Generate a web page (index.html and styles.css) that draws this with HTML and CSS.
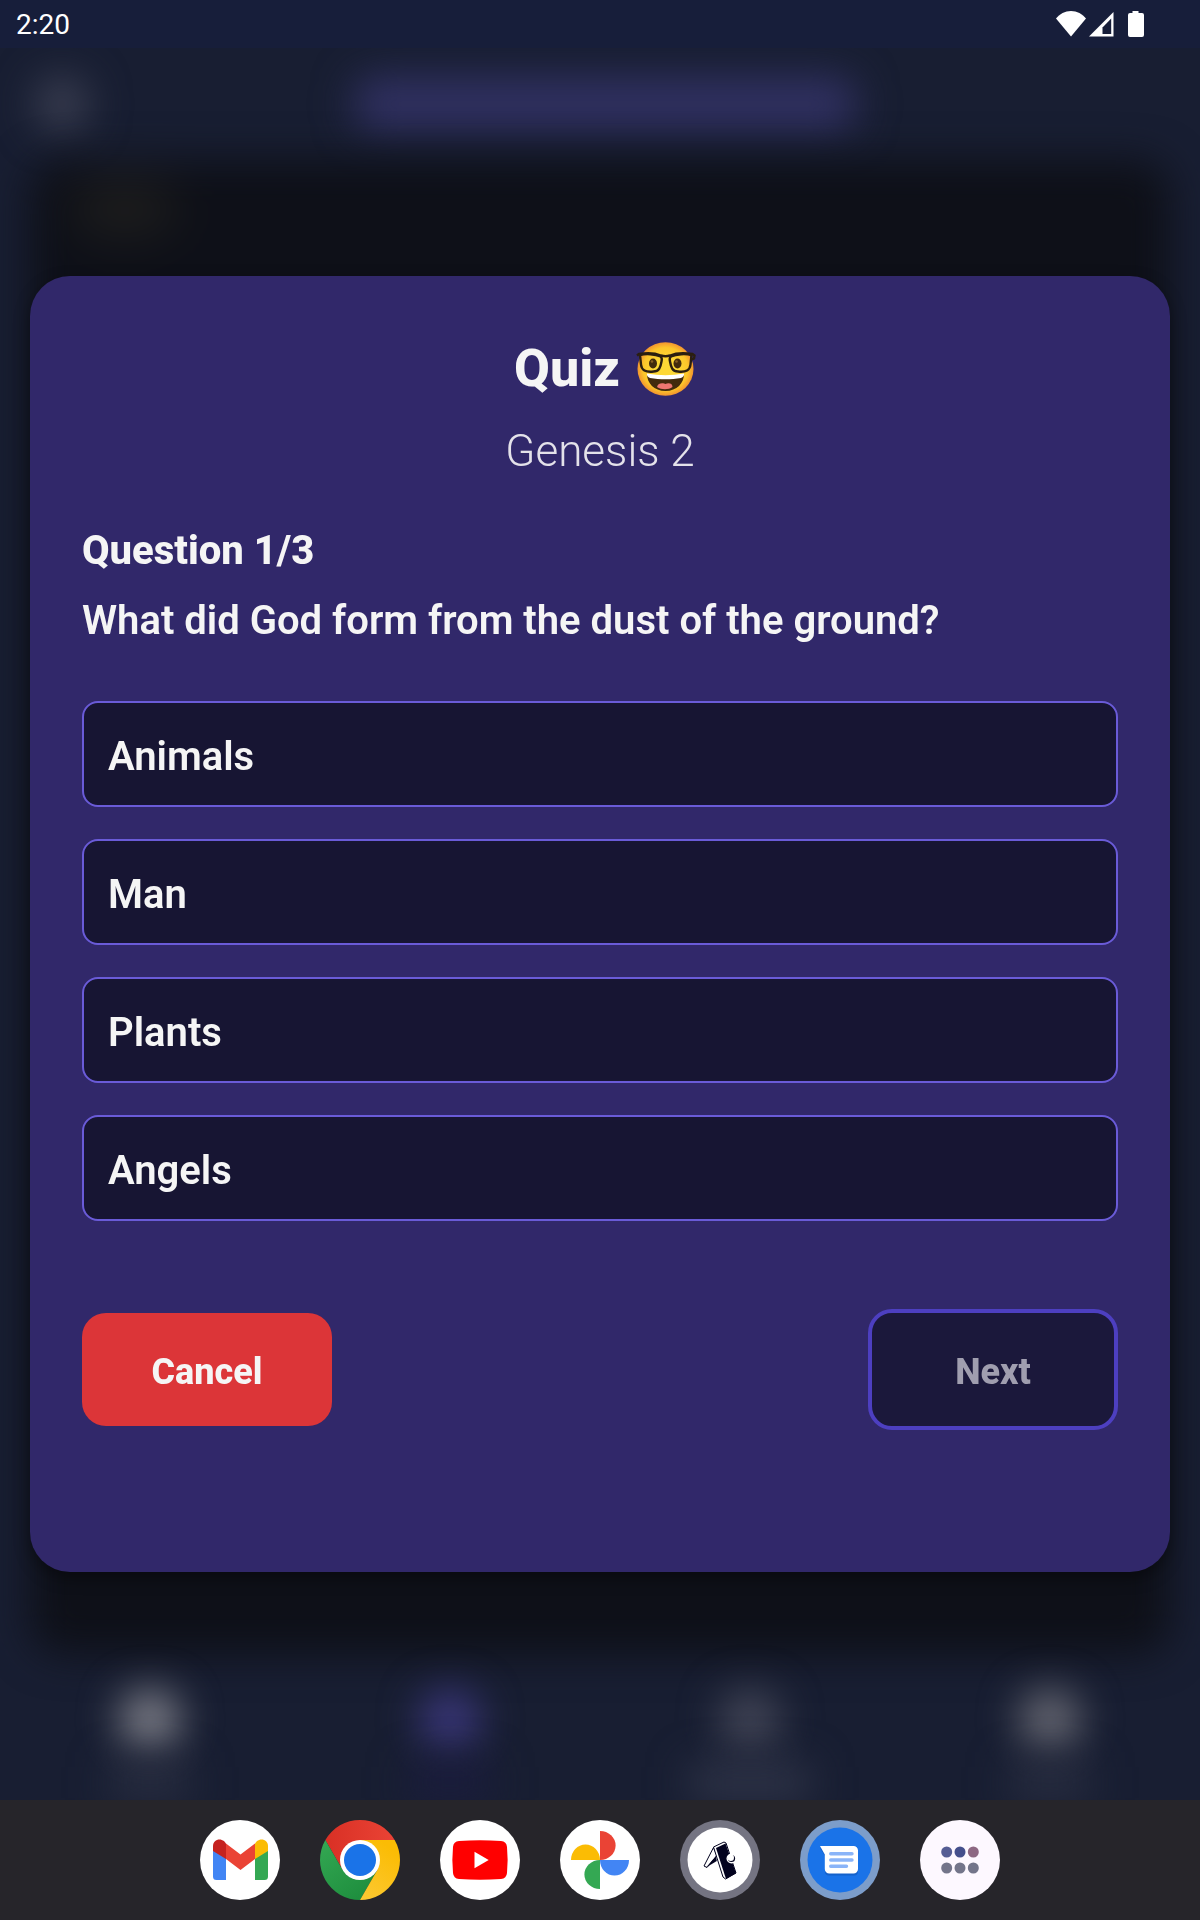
FILE: index.html
```html
<!DOCTYPE html>
<html lang="en">
<head>
<meta charset="utf-8">
<meta name="viewport" content="width=device-width, initial-scale=1">
<title>Quiz - Genesis 2</title>
<link rel="stylesheet" href="styles.css">
</head>
<body>
<div class="screen">
  <header class="status-bar">
    <time class="clock">2:20</time>
    <svg class="status-icons" viewBox="0 0 90 28" aria-hidden="true">
      <path d="M15 26.500 0 8.500C3.500 4 9 1 15 1s11.500 3 15 7.500z" fill="#fff"/>
      <path d="M33 26.500 57.500 2v24.500z" fill="#fff"/>
      <path d="M46.500 24V17.500L55.200 8.500V24z" fill="#171e3a"/>
      <path d="M76.500 3V1h6v2H86a2 2 0 0 1 2 2v20a2 2 0 0 1-2 2H74a2 2 0 0 1-2-2V5a2 2 0 0 1 2-2z" fill="#fff"/>
    </svg>
  </header>

  <main class="stage">
    <div class="backdrop" aria-hidden="true">
      <div class="bg-header">
        <span class="glow avatar"></span>
        <span class="glow pill"></span>
      </div>
      <div class="bg-panel"><span class="glow tag"></span></div>
      <div class="bg-tabs">
        <div class="bg-tab"><span class="glow tab-icon bright"></span><span class="glow tab-label"></span></div>
        <div class="bg-tab"><span class="glow tab-icon active"></span><span class="glow tab-label dim"></span></div>
        <div class="bg-tab"><span class="glow tab-icon faint"></span><span class="glow tab-label wide"></span></div>
        <div class="bg-tab"><span class="glow tab-icon soft"></span><span class="glow tab-label"></span></div>
      </div>
    </div>

    <section class="quiz" role="dialog" aria-labelledby="quiz-title">
      <h1 class="quiz-title" id="quiz-title">Quiz
        <svg class="nerd" viewBox="0 0 60 54" role="img" aria-label="nerd face">
          <defs>
            <radialGradient id="face" cx=".5" cy=".5" r=".5">
              <stop offset=".4" stop-color="#fdd835"/>
              <stop offset=".8" stop-color="#fcc62a"/>
              <stop offset="1" stop-color="#f2952f"/>
            </radialGradient>
          </defs>
          <ellipse cx="29.500" cy="27" rx="28" ry="26.700" fill="url(#face)"/>
          <path d="M11 32q18 4.500 37 0c0 9-7 17-18.500 17S11 41 11 32z" fill="#422b0d"/>
          <path d="M11 31.500q18.500 3.500 37 0c.5 2-1 4-3 4.500-10 1.800-21 1.800-31 0-2-.5-3.500-2.500-3-4.500z" fill="#fff"/>
          <path d="M21 45c1-5 7-4 8.500-3 2-1 7-1.500 7 3-4 3-11 3-15.500 0z" fill="#ed7770"/>
          <ellipse cx="17" cy="21.500" rx="4" ry="5" fill="#422b0d"/>
          <ellipse cx="41.500" cy="21.500" rx="4" ry="5" fill="#422b0d"/>
          <circle cx="16" cy="19.500" r="1.300" fill="#896024"/>
          <circle cx="40.500" cy="19.500" r="1.300" fill="#896024"/>
          <path d="M1 13.500 3 12c6-1 16-1 22 1.500 3 1 6 1 9 0C40 11 50 11 56.500 12l2 1.500-.5 3-2 1" fill="none" stroke="#2b1f10" stroke-width="2.400"/>
          <path d="M4 13c6-1.500 15-1 20.500 1.500 1.500 1 1.500 3 1 5-1 6-2.500 10-8 10-8 1-12-1.500-12.500-7z" fill="none" stroke="#2b1f10" stroke-width="2.400"/>
          <path d="M55.500 13c-6-1.500-15-1-20.500 1.500-1.500 1-1.500 3-1 5 1 6 2.500 10 8 10 8 1 12-1.500 12.500-7z" fill="none" stroke="#2b1f10" stroke-width="2.400"/>
        </svg>
      </h1>
      <p class="quiz-subtitle">Genesis 2</p>

      <h2 class="question-count">Question 1/3</h2>
      <p class="question-text">What did God form from the dust of the ground?</p>

      <div class="options">
        <button class="option" type="button">Animals</button>
        <button class="option" type="button">Man</button>
        <button class="option" type="button">Plants</button>
        <button class="option" type="button">Angels</button>
      </div>

      <div class="actions">
        <button class="action cancel" type="button">Cancel</button>
        <button class="action next" type="button" disabled>Next</button>
      </div>
    </section>
  </main>

  <nav class="dock" aria-label="Apps">
    <button class="app" type="button" aria-label="Gmail">
      <svg viewBox="0 0 80 80">
        <circle cx="40" cy="40" r="40" fill="#fff"/>
        <path d="M13 30 26 38V60H16.500A3.500 3.500 0 0 1 13 56.500z" fill="#4285f4"/>
        <path d="M68 30 55 38V60h9.500a3.500 3.500 0 0 0 3.500-3.500z" fill="#34a853"/>
        <path d="M26 23.500 40.500 34.500 55 23.500V39L40.500 50 26 39z" fill="#ea4335"/>
        <path d="M13 31V26c0-6 6.500-8.500 11-5l2 2.500V39z" fill="#c5221f"/>
        <path d="M68 31V26c0-6-6.500-8.500-11-5l-2 2.500V39z" fill="#fbbc04"/>
      </svg>
    </button>
    <button class="app" type="button" aria-label="Chrome">
      <svg viewBox="0 0 80 80">
        <defs>
          <linearGradient id="cr"><stop offset="0" stop-color="#d93025"/><stop offset="1" stop-color="#ea4335"/></linearGradient>
          <linearGradient id="cg" x1="0" y1="0" x2=".7" y2="1"><stop offset="0" stop-color="#34a853"/><stop offset="1" stop-color="#1e8e3e"/></linearGradient>
          <linearGradient id="cy" x1="0" y1="1" x2=".5" y2="0"><stop offset="0" stop-color="#fcc934"/><stop offset="1" stop-color="#fbbc04"/></linearGradient>
        </defs>
        <path d="M5.360 20A40 40 0 0 1 74.640 20H40L22.700 50z" fill="url(#cr)"/>
        <path d="M5.360 20A40 40 0 0 0 40 80L57.300 50H22.700z" fill="url(#cg)"/>
        <path d="M74.640 20A40 40 0 0 1 40 80L57.300 50 40 20z" fill="url(#cy)"/>
        <circle cx="40" cy="40" r="20" fill="#fff"/>
        <circle cx="40" cy="40" r="16" fill="#1a73e8"/>
      </svg>
    </button>
    <button class="app" type="button" aria-label="YouTube">
      <svg viewBox="0 0 80 80">
        <circle cx="40" cy="40" r="40" fill="#fff"/>
        <path d="M19 21q21-1.300 42 0 5.500.5 6 6 1.300 13 0 26-.5 5.500-6 6-21 1.300-42 0-5.500-.5-6-6-1.300-13 0-26 .5-5.500 6-6z" fill="#f00"/>
        <path d="M34.500 31.800 48.700 40 34.500 48.200z" fill="#fff"/>
      </svg>
    </button>
    <button class="app" type="button" aria-label="Photos">
      <svg viewBox="0 0 80 80">
        <circle cx="40" cy="40" r="40" fill="#fff"/>
        <path d="M40 11a15.600 14.500 0 0 1 0 29z" fill="#ea4335"/>
        <path d="M69 40a14.500 15.600 0 0 1-29 0z" fill="#4285f4"/>
        <path d="M40 69a15.600 14.500 0 0 1 0-29z" fill="#34a853"/>
        <path d="M11 40a14.500 15.600 0 0 1 29 0z" fill="#fbbc04"/>
      </svg>
    </button>
    <button class="app" type="button" aria-label="Bible app">
      <svg viewBox="0 0 80 80">
        <circle cx="40" cy="40" r="40" fill="#747482"/>
        <circle cx="40" cy="40" r="32.500" fill="#fff"/>
        <path d="M33.500 27.500 24 46l3 1.500 10-12z" fill="#fff" stroke="#02021e" stroke-linejoin="round"/>
        <path d="M26 47.500 36 36l.8 5z" fill="#02021e"/>
        <path d="M33.500 27 44 22l2 1 10 30-10.500 6-2.500-2z" fill="#fff" stroke="#02021e" stroke-linejoin="round"/>
        <path d="M36 28 45.500 23.500 56 53.300 46 59z" fill="#02021e"/>
        <circle cx="51.500" cy="38.500" r="5" fill="#fff"/>
        <circle cx="51.500" cy="38.500" r="3.600" fill="#02021e"/>
        <circle cx="50.800" cy="37.800" r="3.200" fill="#fff"/>
      </svg>
    </button>
    <button class="app" type="button" aria-label="Messages">
      <svg viewBox="0 0 80 80">
        <circle cx="40" cy="40" r="40" fill="#7c9dca"/>
        <circle cx="40" cy="40" r="32.500" fill="#1a73e8"/>
        <path d="M20 28H54a4 4 0 0 1 4 4V51.500a4 4 0 0 1-4 4H29a4 4 0 0 1-4-4V36z" fill="#0d47a1" opacity=".4"/>
        <path d="M20 26H53.500A4.500 4.500 0 0 1 58 30.500V49a4.500 4.500 0 0 1-4.500 4.500H29.300A4.500 4.500 0 0 1 24.800 49V34.500z" fill="#fff"/>
        <path d="M30.700 33.700H52M30.700 40H52M30.700 46.200H46.500" stroke="#8ab4f8" stroke-width="3.400" stroke-linecap="round"/>
      </svg>
    </button>
    <button class="app" type="button" aria-label="All apps">
      <svg viewBox="0 0 80 80">
        <circle cx="40" cy="40" r="40" fill="#fdf8ff"/>
        <circle cx="26.700" cy="32" r="5.500" fill="#555d94"/>
        <circle cx="40" cy="32" r="5.500" fill="#444f8c"/>
        <circle cx="53.300" cy="32" r="5.500" fill="#8d6883"/>
        <circle cx="26.700" cy="48" r="5.500" fill="#73758a"/>
        <circle cx="40" cy="48" r="5.500" fill="#73758a"/>
        <circle cx="53.300" cy="48" r="5.500" fill="#73758a"/>
      </svg>
    </button>
  </nav>
</div>
</body>
</html>
```
FILE: styles.css
```css
* {
  box-sizing: border-box;
}

body {
  margin: 0;
  background: #181e32;
  color: #f5f5f5;
  font-family: Roboto, "Liberation Sans", sans-serif;
}

h1,
h2,
p {
  margin: 0;
}

button {
  margin: 0;
  border: 0;
  font-family: inherit;
  color: inherit;
  cursor: pointer;
}

.screen {
  display: flex;
  flex-direction: column;
  min-height: 100vh;
}

/* System bar */
.status-bar {
  display: flex;
  align-items: center;
  justify-content: space-between;
  height: 48px;
  padding: 0 54px 0 16px;
  background: #171e3a;
  color: #fff;
}

.clock {
  padding-top: 2px;
  font-size: 28px;
  line-height: 46px;
}

.status-icons {
  width: 90px;
  height: 28px;
}

/* Dimmed page behind the dialog */
.stage {
  position: relative;
  display: flex;
  flex: 1;
  flex-direction: column;
  justify-content: center;
  padding: 48px 30px;
}

.backdrop {
  position: absolute;
  inset: 0;
  display: flex;
  flex-direction: column;
  overflow: hidden;
}

.glow {
  display: block;
  filter: blur(20px);
}

.bg-header {
  display: grid;
  grid-template-columns: 1fr 510px 1fr;
  align-items: center;
  height: 112px;
  padding: 0 36px;
}

.avatar {
  width: 52px;
  height: 56px;
  border-radius: 24px;
  background: #3b3f52;
}

.pill {
  grid-column: 2;
  height: 54px;
  margin-left: 10px;
  border-radius: 16px;
  background: #313163;
}

.bg-panel {
  flex: 1;
  margin: 0 30px;
  padding: 32px 50px;
  border-radius: 32px;
  background: #0e1018;
  filter: blur(20px);
}

.tag {
  width: 90px;
  height: 32px;
  background: #2b2922;
}

.bg-tabs {
  display: flex;
  justify-content: space-around;
  height: 146px;
}

.bg-tab {
  display: flex;
  flex: 1;
  flex-direction: column;
  align-items: center;
  gap: 16px;
  padding-top: 36px;
}

.tab-icon {
  width: 60px;
  height: 66px;
  border-radius: 28px;
}

.bright {
  background: #82838c;
}

.active {
  background: #3c387e;
}

.faint {
  background: #454859;
}

.soft {
  background: #6b6c76;
}

.tab-label {
  width: 80px;
  height: 40px;
  background: #2a2f42;
}

.tab-label.dim {
  background: #1b1c3f;
}

.tab-label.wide {
  width: 120px;
  background: #31364a;
}

/* Quiz dialog */
.quiz {
  position: relative;
  padding: 61px 52px 142px;
  border-radius: 40px;
  background: #31286a;
  box-shadow: 0 6px 16px rgba(0, 0, 0, 0.4);
}

.quiz-title {
  display: flex;
  align-items: center;
  justify-content: center;
  gap: 16px;
  padding-left: 10px;
  font-size: 52px;
  font-weight: 800;
  line-height: 64px;
}

.nerd {
  width: 60px;
  height: 54px;
}

.quiz-subtitle {
  margin-top: 20px;
  color: #e4e2ea;
  font-size: 44px;
  font-weight: 300;
  line-height: 60px;
  text-align: center;
}

.question-count {
  margin-top: 46px;
  font-size: 40px;
  font-weight: 800;
  line-height: 48px;
}

.question-text {
  margin-top: 22px;
  font-size: 40px;
  font-weight: 600;
  line-height: 48px;
}

.options {
  display: flex;
  flex-direction: column;
  gap: 32px;
  margin-top: 56px;
}

.option {
  min-height: 106px;
  padding: 6px 24px 0;
  border: 2px solid #6a5bd8;
  border-radius: 16px;
  background: #171533;
  font-size: 40px;
  font-weight: 600;
  line-height: 48px;
  text-align: left;
}

.actions {
  display: flex;
  align-items: center;
  justify-content: space-between;
  margin-top: 88px;
}

.action {
  width: 250px;
  padding: 37px 0 32px;
  border-radius: 24px;
  font-size: 36px;
  font-weight: 800;
  line-height: 44px;
}

.cancel {
  background: #dc3538;
}

.next {
  border: 4px solid #4d3fc0;
  background: #1b183b;
  color: #a09eaf;
}

/* App dock */
.dock {
  display: flex;
  align-items: center;
  justify-content: center;
  gap: 40px;
  height: 120px;
  background: #26252a;
}

.app {
  width: 80px;
  height: 80px;
  padding: 0;
  border-radius: 50%;
  background: none;
}

.app svg {
  display: block;
  width: 80px;
  height: 80px;
}
```
